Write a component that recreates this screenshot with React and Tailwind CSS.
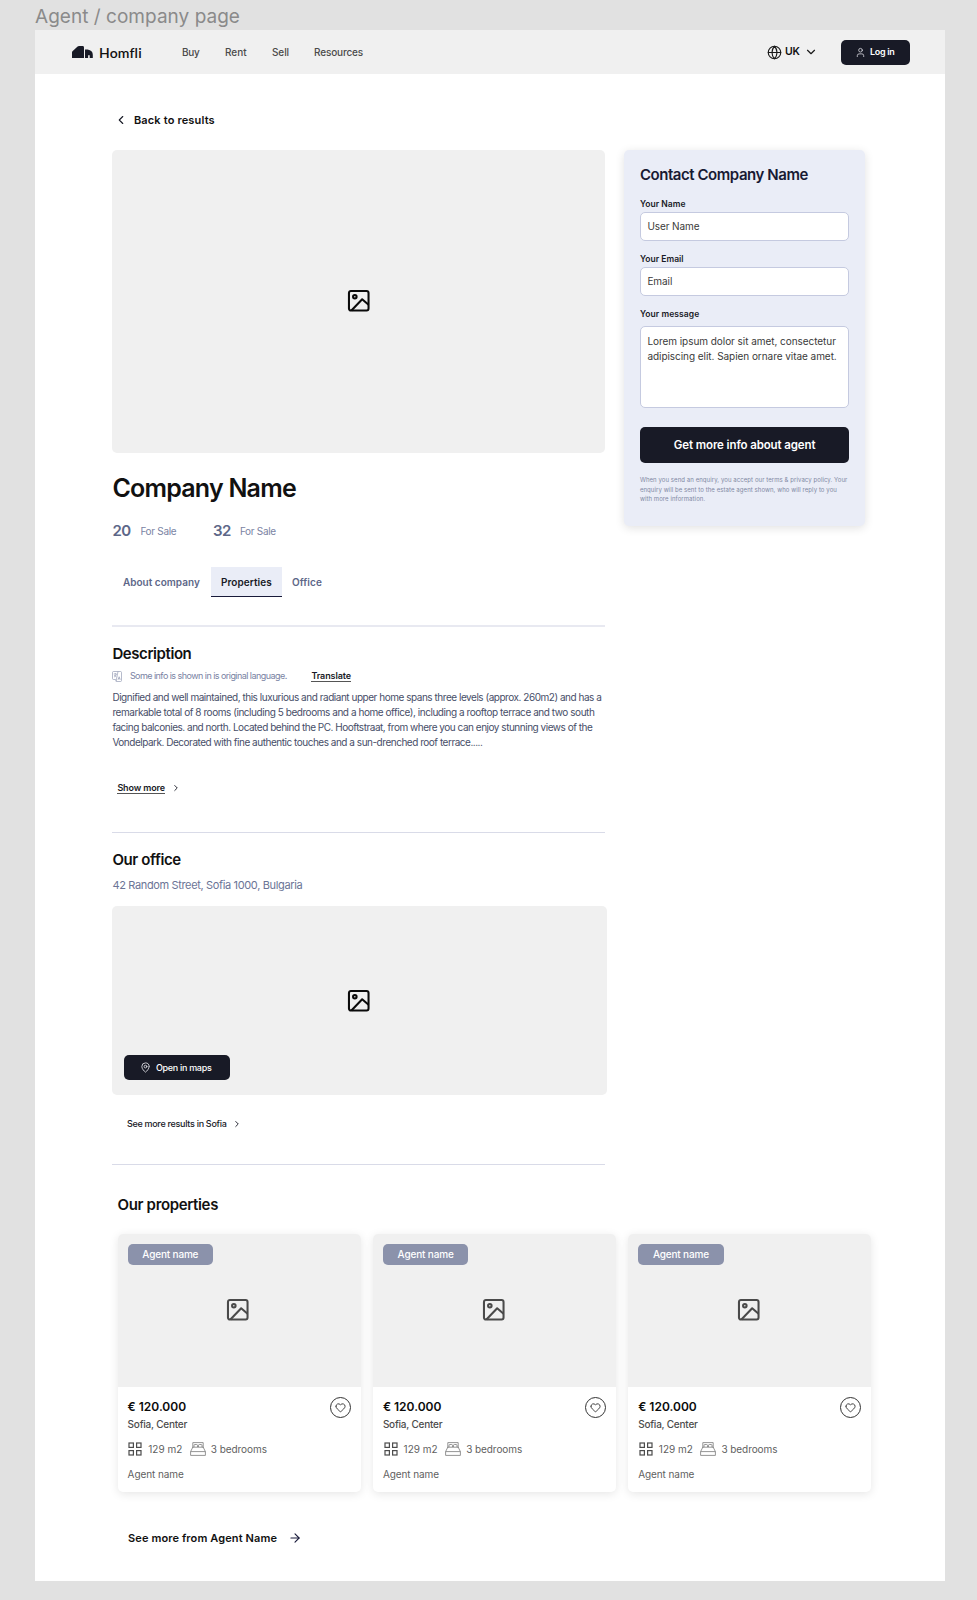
import { ArrowRight, ChevronDown, ChevronLeft, ChevronRight, Globe, Heart, MapPin, User } from "lucide-react";

function ImageIcon({ className }) {
  return (
    <svg viewBox="0 0 24 24" fill="none" stroke="currentColor" strokeWidth="2.1" strokeLinejoin="round" className={className}>
      <rect x="2" y="2" width="20" height="20" rx="2" />
      <circle cx="8" cy="8" r="1.8" />
      <path d="M4.5 22 15.500 10.500 22 16" />
    </svg>
  );
}

function LogoMark() {
  return (
    <svg viewBox="0 0 21 12" className="h-[12px] w-[21px] shrink-0" fill="#181a26">
      <path d="M0 12V6.400Q0 5.700.5 5.200L5.600.6Q6.200 0 7 0H10.600Q12 0 12 1.400V12Z" />
      <path d="M13 3.600H15.600Q20.800 4.400 20.800 8.800V12H17.700V9.200H16.100V12H13Z" />
    </svg>
  );
}

function TranslateIcon() {
  return (
    <svg viewBox="0 0 20 22" className="h-[11px] w-[10px] shrink-0" fill="none" stroke="#8e96b0" strokeWidth="1.3">
      <path d="M1 3a2 2 0 0 1 2-2h14a2 2 0 0 1 2 2v16a2 2 0 0 1-2 2H9l-2-4H3a2 2 0 0 1-2-2z" />
      <path d="M12 1 8 21M3.500 6h6M6.500 4v2M8.500 6c-.5 3-2.500 5-4.500 6M4.500 8c1 2 2.500 3 4 3.500M12 17.500l2.300-6 2.300 6M12.800 15.500h3" />
    </svg>
  );
}

function RoomsIcon() {
  return (
    <svg viewBox="0 0 14 14" className="ml-[0.7px] h-[14px] w-[14px] shrink-0" fill="none" stroke="#4c4c4c" strokeWidth="1.2">
      <rect x="1" y="1" width="4.400" height="4.400" />
      <rect x="8.600" y="1" width="4.400" height="4.400" />
      <rect x="1" y="8.600" width="4.400" height="4.400" />
      <rect x="8.600" y="8.600" width="4.400" height="4.400" />
    </svg>
  );
}

function BedIcon() {
  return (
    <svg viewBox="0 0 16 14" className="h-[14px] w-[16px] shrink-0" fill="none" stroke="#7a7a7a" strokeWidth="0.8" strokeLinejoin="round">
      <path d="M2.800 6V.6h10.400V6M2.800 5.200.6 9.600v3.800h14.800V9.600L13.200 5.200z" />
      <path d="M.6 9.600h14.800M4 5V3.400q0-.9.900-.9h1.700q.9 0 .9.900V5M8.500 5V3.400q0-.9.900-.9h1.700q.9 0 .9.900V5" />
    </svg>
  );
}

function Divider({ className }) {
  return <div className={`w-[493px] ${className}`} />;
}

function Field({ label, value, className }) {
  return (
    <label className={`block ${className}`}>
      <span className="block h-[12px] text-[8.5px] leading-[12px] font-semibold tracking-[0.05px] text-[#181a26]">{label}</span>
      <span className="mt-[2px] flex h-[29px] items-center rounded-[5px] border border-[#c5cae0] bg-white px-[6.5px] text-[10px] tracking-[-0.08px] text-[#3a3a3a]">
        {value}
      </span>
    </label>
  );
}

function PropertyCard() {
  return (
    <article className="h-[258px] w-[243px] overflow-hidden rounded-[5px] bg-white shadow-[0_2px_10px_rgba(0,0,0,0.10)]">
      <div className="relative flex h-[153px] items-center justify-center bg-[#f0f0f0]">
        <span className="absolute top-[10px] left-[10px] flex h-[20.5px] w-[85.5px] items-center justify-center rounded-[5px] bg-[#8b92ab] text-[10px] font-medium tracking-[-0.16px] text-white">
          Agent name
        </span>
        <ImageIcon className="mt-[-1px] ml-[-2px] h-[23.5px] w-[23.5px] text-[#4a4a4a]" />
      </div>
      <div className="px-[10px] pt-[10px]">
        <div className="flex h-[20px] items-center justify-between">
          <span className="text-[12px] font-semibold text-[#0b0b0b]">€ 120.000</span>
          <span className="flex h-[21px] w-[21px] items-center justify-center rounded-full border border-[#333]">
            <Heart size={11} strokeWidth={2} className="text-[#333]" />
          </span>
        </div>
        <div className="mt-[-1px] h-[16px] text-[10px] leading-[16px] font-medium tracking-[-0.22px] text-[#4c4c4c]">Sofia, Center</div>
        <div className="mt-[9px] flex h-[16px] items-center text-[10px] text-[#5f5f5f]">
          <RoomsIcon />
          <span className="ml-[6px] w-[41.6px]">129 m2</span>
          <BedIcon />
          <span className="ml-[5px] tracking-[-0.07px]">3 bedrooms</span>
        </div>
        <div className="mt-[9px] h-[16px] text-[10px] leading-[16px] tracking-[-0.08px] text-[#5f5f5f]">Agent name</div>
      </div>
    </article>
  );
}

function Header() {
  return (
    <header className="flex h-[44px] items-center bg-[#f0f0f0] pr-[35px] pl-[36.5px]">
      <LogoMark />
      <span className="mt-[2px] ml-[6.5px] w-[76px] text-[14px] leading-[18px] font-semibold tracking-[0.15px] text-[#111] [font-family:Lato,sans-serif]">Homfli</span>
      <nav className="ml-[7px] flex flex-1 text-[10px] font-medium text-[#4a4a4a]">
        <a className="w-[43px] tracking-[-0.3px]">Buy</a>
        <a className="w-[47px] tracking-[-0.03px]">Rent</a>
        <a className="w-[42px] tracking-[-0.1px]">Sell</a>
        <a className="tracking-[-0.15px]">Resources</a>
      </nav>
      <Globe size={15} strokeWidth={1.8} className="text-[#1a1a1a]" />
      <span className="ml-[2.5px] text-[10.5px] font-semibold tracking-[-0.3px] text-[#111]">UK</span>
      <ChevronDown size={14} strokeWidth={2} className="ml-[4px] text-[#1a1a1a]" />
      <button className="ml-[23.5px] flex h-[25px] w-[69px] items-center rounded-[5px] bg-[#181a26] pl-[14px] text-[9px] font-semibold tracking-[-0.3px] text-white">
        <User size={11} strokeWidth={1.8} className="mr-[4px] text-[#d5d5dc]" />
        Log in
      </button>
    </header>
  );
}

function ContactCard() {
  return (
    <aside className="h-[375.5px] w-[240.5px] rounded-[5px] bg-[#eaedf7] px-[15.5px] pt-[15px] shadow-[0_2px_10px_rgba(0,0,0,0.12)]">
      <h2 className="h-[20px] text-[15px] leading-[20px] font-semibold tracking-[-0.445px] whitespace-nowrap text-[#181a33]">Contact Company Name</h2>
      <Field label="Your Name" value="User Name" className="mt-[13px]" />
      <Field label="Your Email" value="Email" className="mt-[12px]" />
      <div className="mt-[12px] h-[12px] text-[8.5px] leading-[12px] font-semibold tracking-[0.09px] text-[#181a26]">Your message</div>
      <div className="mt-[6px] h-[82px] rounded-[5px] border border-[#c5cae0] bg-white px-[6.5px] pt-[7px] text-[10px] leading-[15.2px] tracking-[-0.05px] whitespace-nowrap text-[#3a3a3a]">
        Lorem ipsum dolor sit amet, consectetur
        <br />
        adipiscing elit. Sapien ornare vitae amet.
      </div>
      <button className="mt-[19px] flex h-[36px] w-full items-center justify-center rounded-[5px] bg-[#181a26] pt-[1px] text-[11.5px] font-semibold tracking-[-0.11px] text-white">
        Get more info about agent
      </button>
      <p className="mt-[12px] text-[6px] leading-[9.5px] tracking-[0.076px] whitespace-nowrap text-[#8088a3]">
        When you send an enquiry, you accept our terms &amp; privacy policy. Your
        <br />
        enquiry will be sent to the estate agent shown, who will reply to you
        <br />
        with more information.
      </p>
    </aside>
  );
}

export default function App() {
  return (
    <div className="h-[1600px] w-[977px] overflow-hidden bg-[#e1e1e1] [font-family:Inter,sans-serif]">
      <div className="h-[30px] pl-[35px] text-[19px] leading-[33px] tracking-[0.03px] text-[#8a8a8a]">Agent / company page</div>
      <div className="ml-[35px] h-[1551px] w-[910px] bg-white">
        <Header />
        <main className="pl-[77.4px]">
          <a className="mt-[36px] ml-[2px] flex h-[20px] items-center text-[11px] font-semibold tracking-[0.16px] text-[#111]">
            <ChevronLeft size={14} strokeWidth={1.9} className="mr-[5.5px] text-[#181a26]" />
            Back to results
          </a>

          <div className="mt-[20px] flex items-start">
            <div className="w-[512px]">
              <div className="flex h-[303px] w-[493px] items-center justify-center rounded-[5px] bg-[#f0f0f0]">
                <ImageIcon className="mt-[-2px] ml-[-1px] h-[23.5px] w-[23.5px] text-[#0b0b0b]" />
              </div>
              <h1 className="mt-[18px] h-[34px] text-[25px] leading-[34px] font-semibold tracking-[-0.78px] text-[#111]">Company Name</h1>
              <div className="mt-[16px] flex h-[20px] items-center text-[10px] text-[#7a83a3]">
                <span className="w-[28px] text-[15px] font-semibold tracking-[-0.5px] text-[#5d6788]">20</span>
                <span className="w-[72.5px] tracking-[-0.3px]">For Sale</span>
                <span className="w-[27px] text-[15px] font-semibold tracking-[-0.5px] text-[#5d6788]">32</span>
                <span className="tracking-[-0.3px]">For Sale</span>
              </div>
              <div className="mt-[26px] flex h-[30px] text-[10px] leading-[30px] font-semibold text-[#5d6788]">
                <span className="w-[98.5px] pl-[10.5px] tracking-[0.03px]">About company</span>
                <span className="w-[71px] border-b border-[#181a3a] bg-[#eaedf7] pl-[10px] tracking-[0.08px] text-[#181a26]">Properties</span>
                <span className="pl-[10px] tracking-[0.09px]">Office</span>
              </div>
              <Divider className="mt-[28px] h-[2px] bg-[#e8e9f1]" />

              <h2 className="mt-[17px] h-[20px] text-[15px] leading-[20px] font-semibold tracking-[-0.42px] text-[#111]">Description</h2>
              <div className="mt-[4px] flex h-[16px] items-center text-[9px]">
                <TranslateIcon />
                <span className="ml-[7.5px] w-[181.5px] tracking-[-0.55px] text-[#7a83a3]">Some info is shown in is original language.</span>
                <a className="border-b border-[#555] text-[9px] leading-[11px] font-semibold tracking-[-0.11px] text-[#181a26]">Translate</a>
              </div>
              <p className="mt-[5.5px] h-[60.5px] text-[10px] leading-[15.2px] whitespace-nowrap text-[#474e68]">
                <span className="block tracking-[-0.469px]">Dignified and well maintained, this luxurious and radiant upper home spans three levels (approx. 260m2) and has a</span>
                <span className="block tracking-[-0.446px]">remarkable total of 8 rooms (including 5 bedrooms and a home office), including a rooftop terrace and two south</span>
                <span className="block tracking-[-0.478px]">facing balconies. and north. Located behind the PC. Hooftstraat, from where you can enjoy stunning views of the</span>
                <span className="block tracking-[-0.477px]">Vondelpark. Decorated with fine authentic touches and a sun-drenched roof terrace.....</span>
              </p>
              <div className="mt-[30px] ml-[5px] flex h-[16px] items-center">
                <a className="border-b border-[#555] text-[9px] leading-[11px] font-semibold tracking-[-0.14px] text-[#181a26]">Show more</a>
                <ChevronRight size={10} strokeWidth={2.2} className="ml-[6px] text-[#181a26]" />
              </div>
              <Divider className="mt-[36px] h-px bg-[#d9dbe8]" />

              <h2 className="mt-[17px] h-[20px] text-[15px] leading-[20px] font-semibold tracking-[-0.38px] text-[#111]">Our office</h2>
              <p className="mt-[6px] h-[18px] text-[11px] leading-[18px] tracking-[-0.352px] text-[#6b7496]">42 Random Street, Sofia 1000, Bulgaria</p>
              <div className="relative mt-[12px] flex h-[189px] w-[494.5px] items-center justify-center rounded-[5px] bg-[#f0f0f0]">
                <ImageIcon className="ml-[-2px] h-[23.5px] w-[23.5px] text-[#0b0b0b]" />
                <button className="absolute top-[149px] left-[12px] flex h-[25px] w-[105.5px] items-center rounded-[5px] bg-[#181a26] pl-[16px] text-[9px] font-medium tracking-[-0.3px] text-white">
                  <MapPin size={11} strokeWidth={2} className="mr-[4.5px] text-[#d5d5dc]" />
                  Open in maps
                </button>
              </div>
              <div className="mt-[21px] ml-[14.5px] flex h-[16px] items-center text-[9px] font-medium tracking-[-0.29px] text-[#181a26]">
                See more results in Sofia
                <ChevronRight size={10} strokeWidth={2.2} className="ml-[5px]" />
              </div>
              <Divider className="mt-[32px] h-px bg-[#d9dbe8]" />
            </div>
            <ContactCard />
          </div>

          <section className="ml-[5.2px]">
            <h2 className="mt-[30px] h-[20px] text-[15px] leading-[20px] font-semibold tracking-[-0.35px] text-[#111]">Our properties</h2>
            <div className="mt-[19px] flex gap-[12.3px]">
              <PropertyCard />
              <PropertyCard />
              <PropertyCard />
            </div>
            <a className="mt-[36px] ml-[10.5px] flex h-[20px] items-center text-[11px] font-semibold tracking-[0.108px] text-[#111]">
              See more from Agent Name
              <ArrowRight size={14} strokeWidth={1.9} className="ml-[11px] text-[#181a3a]" />
            </a>
          </section>
        </main>
      </div>
    </div>
  );
}
